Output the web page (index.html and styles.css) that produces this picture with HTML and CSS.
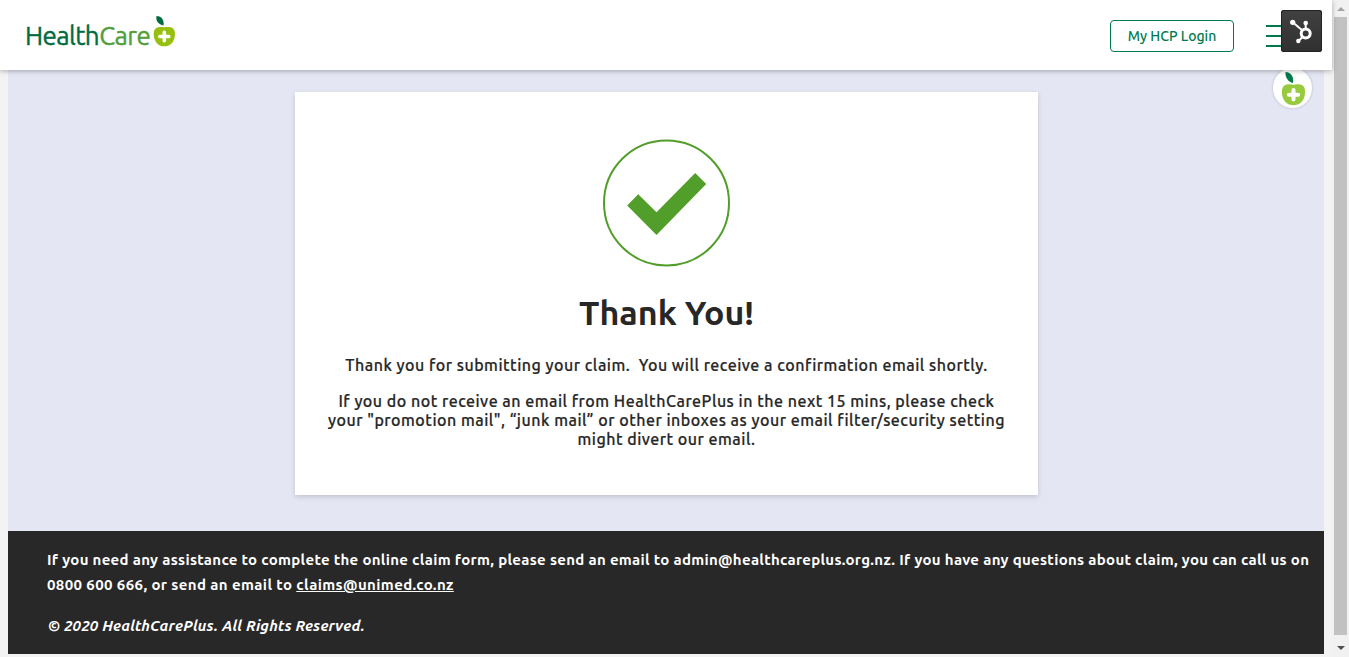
FILE: index.html
```html
<!DOCTYPE html>
<html lang="en">
<head>
    <meta charset="UTF-8">
    <meta name="viewport" content="width=device-width, initial-scale=1.0">
    <title>Thank You - HealthCarePlus</title>
    <link rel="stylesheet" href="styles.css">
</head>
<body>
    <div class="page">
        <header class="header">
            <a class="logo" href="#">
                <span class="logo-text"><span class="logo-health">Health</span><span class="logo-care">Care</span></span>
                <svg class="logo-apple" width="24" height="32" viewBox="0 0 24 32">
                    <path fill="#006b3f" d="M4.500 1C8.500 1 12.500 4 11.500 10.500C6.500 9.500 3.500 6 4.500 1Z"/>
                    <path fill="#97bf0d" d="M12.300 12.300C15 11.700 18.500 11.700 20.500 13C23.500 15 23.500 20.500 22 24.500C20 29.500 16.500 31.300 12.300 31.300C8 31.300 4.700 29.500 2.700 24.500C1.200 20.500 1.200 15 4.200 13C6.200 11.700 9.600 11.700 12.300 12.300Z"/>
                    <path stroke="#fff" stroke-width="3.600" stroke-linecap="round" d="M12.300 17.300V25.700M7.800 21.500H16.800"/>
                </svg>
            </a>
            <div class="header-right">
                <a class="login" href="#">My HCP Login</a>
                <div class="menu"><i></i><i></i><i></i></div>
            </div>
            <div class="hubspot">
                <svg width="42" height="42" viewBox="0 0 42 42" fill="none" stroke="#fff">
                    <circle cx="24.700" cy="23.500" r="4.500" stroke-width="3"/>
                    <path stroke-width="2" d="M12 12.500L21.500 20.500M24.700 13V19M21.500 27L17.500 31"/>
                    <g fill="#fff" stroke="none">
                        <circle cx="11.700" cy="12.300" r="2.600"/>
                        <circle cx="24.700" cy="13" r="2.300"/>
                        <circle cx="17.300" cy="31" r="2.200"/>
                    </g>
                </svg>
            </div>
        </header>

        <main class="main">
            <div class="apple-badge">
                <svg width="39" height="40" viewBox="0 0 39 40">
                    <path fill="#007a4d" d="M12.500 4C17.500 4 21 8 20 15C15 14 12 9 12.500 4Z"/>
                    <path fill="#97ca3d" d="M20.500 16.800C23.500 16 27.500 16 29.700 17.500C32.700 19.500 32.500 26 31 30C29 35.200 25 37.200 20.500 37.200C16 37.200 12 35.200 10 30C8.500 26 8.300 19.500 11.300 17.500C13.500 16 17.500 16 20.500 16.800Z"/>
                    <path stroke="#fff" stroke-width="4" stroke-linecap="round" d="M20.500 22V31.400M15.800 26.700H25.200"/>
                </svg>
            </div>
            <div class="card">
                <svg class="check" width="128" height="128" viewBox="0 0 128 128">
                    <circle cx="63.500" cy="64" r="62.500" fill="none" stroke="#529e2a" stroke-width="2"/>
                    <path fill="#529e2a" d="M24.200 66.500L35.200 55.200L53.500 73.200L92.200 34L103.200 45L53.500 96Z"/>
                </svg>
                <h1>Thank You!</h1>
                <p class="first">Thank you for submitting your claim.&nbsp; You will receive a confirmation email shortly.</p>
                <p>
                    If you do not receive an email from HealthCarePlus in the next 15 mins, please check<br>
                    your "promotion mail", “junk mail” or other inboxes as your email filter/security setting<br>
                    might divert our email.
                </p>
            </div>
        </main>

        <footer class="footer">
            <p>
                If you need any assistance to complete the online claim form, please send an email to admin@healthcareplus.org.nz. If you have any questions about claim, you can call us on<br>
                <span class="contact">0800 600 666, or send an email to <a href="#">claims@unimed.co.nz</a></span>
            </p>
            <p class="copyright">© 2020 HealthCarePlus. All Rights Reserved.</p>
        </footer>
    </div>
    <div class="scrollbar">
        <span class="arrow-up"></span>
        <span class="thumb"></span>
        <span class="arrow-down"></span>
    </div>
</body>
</html>
```

FILE: styles.css
```css
* {
    box-sizing: border-box;
}

body {
    margin: 0;
    display: flex;
    height: 657px;
    overflow: hidden;
    background-color: #f3f3f3;
    font-family: Ubuntu, "Noto Sans", sans-serif;
    color: #272727;
}

.page {
    width: 1332px;
    display: flex;
    flex-direction: column;
}

.header {
    position: relative;
    z-index: 2;
    height: 70px;
    flex: none;
    display: flex;
    justify-content: space-between;
    padding: 15px 36px 0 25px;
    background-color: #fff;
    box-shadow: 0 1px 5px rgba(0, 0, 0, 0.3);
}

.logo {
    display: flex;
    height: 34px;
    text-decoration: none;
}

.logo-text {
    width: 127px;
    font-size: 26px;
    line-height: 42px;
    letter-spacing: -0.6px;
    white-space: nowrap;
    -webkit-text-stroke: 0.4px;
}

.logo-health {
    color: #006b3f;
}

.logo-care {
    color: #529e3a;
}

.header-right {
    display: flex;
    gap: 32px;
}

.login {
    width: 124px;
    height: 32px;
    margin-top: 5px;
    border: 1px solid #00794c;
    border-radius: 4px;
    color: #00794c;
    font-size: 14px;
    font-weight: 500;
    line-height: 31px;
    text-align: center;
    text-decoration: none;
    white-space: nowrap;
}

.menu {
    width: 30px;
    padding-top: 10px;
}

.menu i {
    display: block;
    height: 2px;
    margin-bottom: 8px;
    background-color: #00794c;
}

.hubspot {
    position: absolute;
    top: 10px;
    right: 10px;
    width: 41px;
    height: 42px;
    border-radius: 3px;
    background: linear-gradient(#414141, #303030);
    box-shadow: inset 0 0 0 1px #222;
}

.main {
    position: relative;
    height: 461px;
    flex: none;
    margin: 0 8px;
    padding-top: 22px;
    background-color: #e4e7f3;
}

.apple-badge {
    position: absolute;
    top: -2px;
    right: 12px;
    width: 39px;
    height: 40px;
    border-radius: 50%;
    background-color: #fff;
    box-shadow: 0 0 3px rgba(0, 0, 0, 0.2);
}

.card {
    width: 743px;
    height: 403px;
    margin: 0 auto 0 287px;
    padding-top: 47px;
    background-color: #fff;
    box-shadow: 0 2px 5px rgba(0, 0, 0, 0.15);
    text-align: center;
    white-space: nowrap;
}

.check {
    display: block;
    margin: 0 auto;
}

.card h1 {
    margin: 24px 0 0;
    font-size: 34px;
    line-height: 42px;
}

.card p {
    margin: 17px 0 0;
    font-size: 16px;
    font-weight: 500;
    line-height: 19px;
    letter-spacing: 0.5px;
    -webkit-text-stroke: 0.2px;
}

.card .first {
    margin-top: 23px;
}

.footer {
    height: 123px;
    flex: none;
    margin: 0 8px;
    padding: 16px 0 0 39px;
    background-color: #282828;
    color: #fff;
    font-size: 15px;
    font-weight: 600;
    white-space: nowrap;
}

.footer p {
    margin: 0;
    line-height: 25px;
    letter-spacing: 0.31px;
}

.footer .contact {
    letter-spacing: 0.39px;
}

.footer a {
    color: #fff;
}

.footer .copyright {
    margin-top: 16px;
    padding-left: 1px;
    font-style: italic;
    letter-spacing: 0.18px;
}

.scrollbar {
    width: 17px;
    display: flex;
    flex-direction: column;
    align-items: center;
    background-color: #f1f1f1;
}

.arrow-up,
.arrow-down {
    border-left: 4px solid transparent;
    border-right: 4px solid transparent;
}

.arrow-up {
    margin-top: 7px;
    border-bottom: 4px solid #a3a3a3;
}

.thumb {
    width: 13px;
    height: 618px;
    margin-top: 6px;
    background-color: #c1c1c1;
}

.arrow-down {
    margin-top: 11px;
    border-top: 4px solid #505050;
}
```
